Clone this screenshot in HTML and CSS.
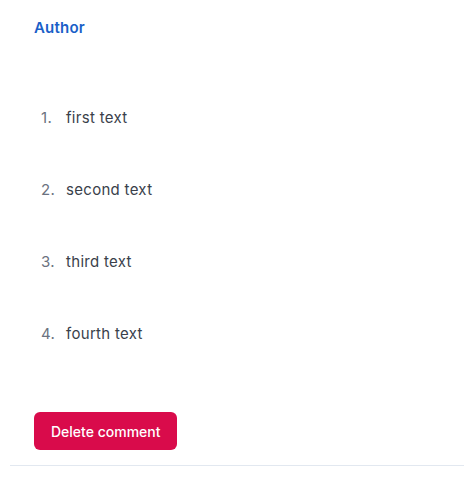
FILE: index.html
```html
<!DOCTYPE html>
<html>
<head>
<meta charset="utf-8">
<link rel="stylesheet" href="styles.css">
</head>
<body>
<div class="comment">
  <div class="author">Author</div>
  <ol class="items">
    <li>first text</li>
    <li>second text</li>
    <li>third text</li>
    <li>fourth text</li>
  </ol>
  <button class="delete">Delete comment</button>
</div>
</body>
</html>
```

FILE: styles.css
```css
html, body {
  margin: 0;
  padding: 0;
  background: #ffffff;
}
body {
  font-family: Inter, "Noto Sans", sans-serif;
}
.comment {
  margin-left: 10px;
  padding: 17px 0 15px 24px;
  border-bottom: 1px solid #e2e8f0;
}
.author {
  font-size: 15px;
  line-height: 22px;
  font-weight: 600;
  letter-spacing: 0.2px;
  color: #1a5fc8;
}
.items {
  margin: 43px 0 42px;
  padding-left: 32px;
  list-style: none;
}
.items li {
  font-size: 15px;
  line-height: 24px;
  padding: 24px 0;
  letter-spacing: 0.3px;
  color: #3a3f4b;
}
.items li::before {
  content: counter(list-item) ".";
  display: inline-block;
  width: 25px;
  margin-left: -25px;
  color: #6b7280;
}
.delete {
  display: block;
  height: 38px;
  padding: 0 17px;
  border: none;
  border-radius: 6px;
  background: #d90b4b;
  color: #ffffff;
  font-family: Inter, "Noto Sans", sans-serif;
  font-size: 14px;
  font-weight: 500;
}
```
